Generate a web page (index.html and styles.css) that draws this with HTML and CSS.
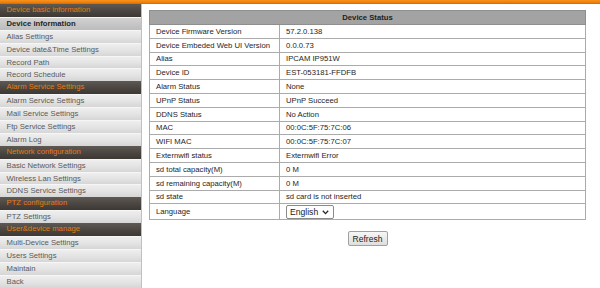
FILE: index.html
```html
<!DOCTYPE html>
<html lang="en">
<head>
    <meta charset="UTF-8">
    <meta name="viewport" content="width=device-width, initial-scale=1.0">
    <title>Device Status</title>
    <link rel="stylesheet" href="styles.css">
</head>
<body>
    <div class="topbar"></div>
    <div class="layout">
        <ul class="menu">
            <li class="menu-head">Device basic information</li>
            <li class="menu-item active">Device information</li>
            <li class="menu-item">Alias Settings</li>
            <li class="menu-item">Device date&amp;Time Settings</li>
            <li class="menu-item">Record Path</li>
            <li class="menu-item">Record Schedule</li>
            <li class="menu-head">Alarm Service Settings</li>
            <li class="menu-item">Alarm Service Settings</li>
            <li class="menu-item">Mail Service Settings</li>
            <li class="menu-item">Ftp Service Settings</li>
            <li class="menu-item">Alarm Log</li>
            <li class="menu-head">Network configuration</li>
            <li class="menu-item">Basic Network Settings</li>
            <li class="menu-item">Wireless Lan Settings</li>
            <li class="menu-item">DDNS Service Settings</li>
            <li class="menu-head">PTZ configuration</li>
            <li class="menu-item">PTZ Settings</li>
            <li class="menu-head">User&amp;device manage</li>
            <li class="menu-item">Multi-Device Settings</li>
            <li class="menu-item">Users Settings</li>
            <li class="menu-item">Maintain</li>
            <li class="menu-item">Back</li>
        </ul>

        <div class="content">
            <table class="status">
                <tr><th colspan="2">Device Status</th></tr>
                <tr><td class="label">Device Firmware Version</td><td>57.2.0.138</td></tr>
                <tr><td class="label">Device Embeded Web UI Version</td><td>0.0.0.73</td></tr>
                <tr><td class="label">Alias</td><td>IPCAM IP951W</td></tr>
                <tr><td class="label">Device ID</td><td>EST-053181-FFDFB</td></tr>
                <tr><td class="label">Alarm Status</td><td>None</td></tr>
                <tr><td class="label">UPnP Status</td><td>UPnP Succeed</td></tr>
                <tr><td class="label">DDNS Status</td><td>No Action</td></tr>
                <tr><td class="label">MAC</td><td>00:0C:5F:75:7C:06</td></tr>
                <tr><td class="label">WIFI MAC</td><td>00:0C:5F:75:7C:07</td></tr>
                <tr><td class="label">Externwifi status</td><td>Externwifi Error</td></tr>
                <tr><td class="label">sd total capacity(M)</td><td>0 M</td></tr>
                <tr><td class="label">sd remaining capacity(M)</td><td>0 M</td></tr>
                <tr><td class="label">sd state</td><td>sd card is not inserted</td></tr>
                <tr class="lang-row">
                    <td class="label">Language</td>
                    <td>
                        <span class="select-wrap">
                            <select class="lang">
                                <option>English</option>
                                <option>简体中文</option>
                            </select>
                            <svg class="chevron" width="7" height="5" viewBox="0 0 7 5">
                                <path d="M0.8 0.8 L3.5 3.6 L6.2 0.8" fill="none" stroke="#222" stroke-width="1.3"/>
                            </svg>
                        </span>
                    </td>
                </tr>
            </table>
            <div class="actions">
                <button class="refresh" type="button">Refresh</button>
            </div>
        </div>
    </div>
</body>
</html>
```

FILE: styles.css
```css
* {
    padding: 0;
    margin: 0;
    box-sizing: border-box;
}
body {
    font-family: "Liberation Sans", Arial, sans-serif;
    font-size: 7.7px;
    background-color: #ffffff;
    overflow: hidden;
}
.topbar {
    height: 4px;
    background: linear-gradient(#f7941d, #ec7a06 70%, #c86a10);
}
.layout {
    display: flex;
    height: 284px;
}
.menu {
    list-style: none;
    width: 142px;
    border-right: 1px solid #f1c232;
    background-color: #dcdcdc;
}
.menu li {
    height: 12.9px;
    line-height: 12.9px;
    padding-left: 6.5px;
    white-space: nowrap;
}
.menu-head {
    color: #e67a18;
    background: linear-gradient(#5e5953, #4a4540 55%, #3c3834);
}
.menu-item {
    color: #5a5a5a;
    background: linear-gradient(#eeeeee, #e4e4e4 50%, #d6d6d6);
    border-top: 1px solid #f6f6f6;
}
.menu-item.active {
    color: #262626;
    font-weight: bold;
    background: linear-gradient(#d2d2d2, #c6c6c6 50%, #bcbcbc);
}
.content {
    padding: 6px 0 0 7px;
}
.status {
    width: 437px;
    border-collapse: collapse;
    color: #1e1e1e;
}
.status th {
    height: 14px;
    background-color: #a3a3a3;
    border: 1px solid #8e8e8e;
    font-weight: bold;
    text-align: center;
}
.status td {
    height: 13.8px;
    border: 1px solid #ababab;
    padding: 0 5px 0 6px;
    white-space: nowrap;
}
.status td.label {
    width: 130px;
}
.lang-row td {
    height: 16px;
}
.select-wrap {
    position: relative;
    display: inline-block;
    vertical-align: middle;
    height: 14px;
}
.lang {
    appearance: none;
    -webkit-appearance: none;
    display: block;
    width: 48px;
    height: 14px;
    padding: 0 0 0 3px;
    font-family: "Liberation Sans", Arial, sans-serif;
    font-size: 8.6px;
    color: #222222;
    border: 1px solid #8a8a8a;
    border-radius: 2px;
    background-color: #ffffff;
}
.chevron {
    position: absolute;
    right: 5px;
    top: 5px;
    pointer-events: none;
}
.actions {
    width: 437px;
    text-align: center;
    padding-top: 11px;
}
.refresh {
    width: 40px;
    height: 15px;
    font-family: "Liberation Sans", Arial, sans-serif;
    font-size: 8.5px;
    color: #222222;
    border: 1px solid #a0a0a0;
    border-radius: 2px;
    background: linear-gradient(#f6f6f6, #dedede);
    cursor: pointer;
}
```
